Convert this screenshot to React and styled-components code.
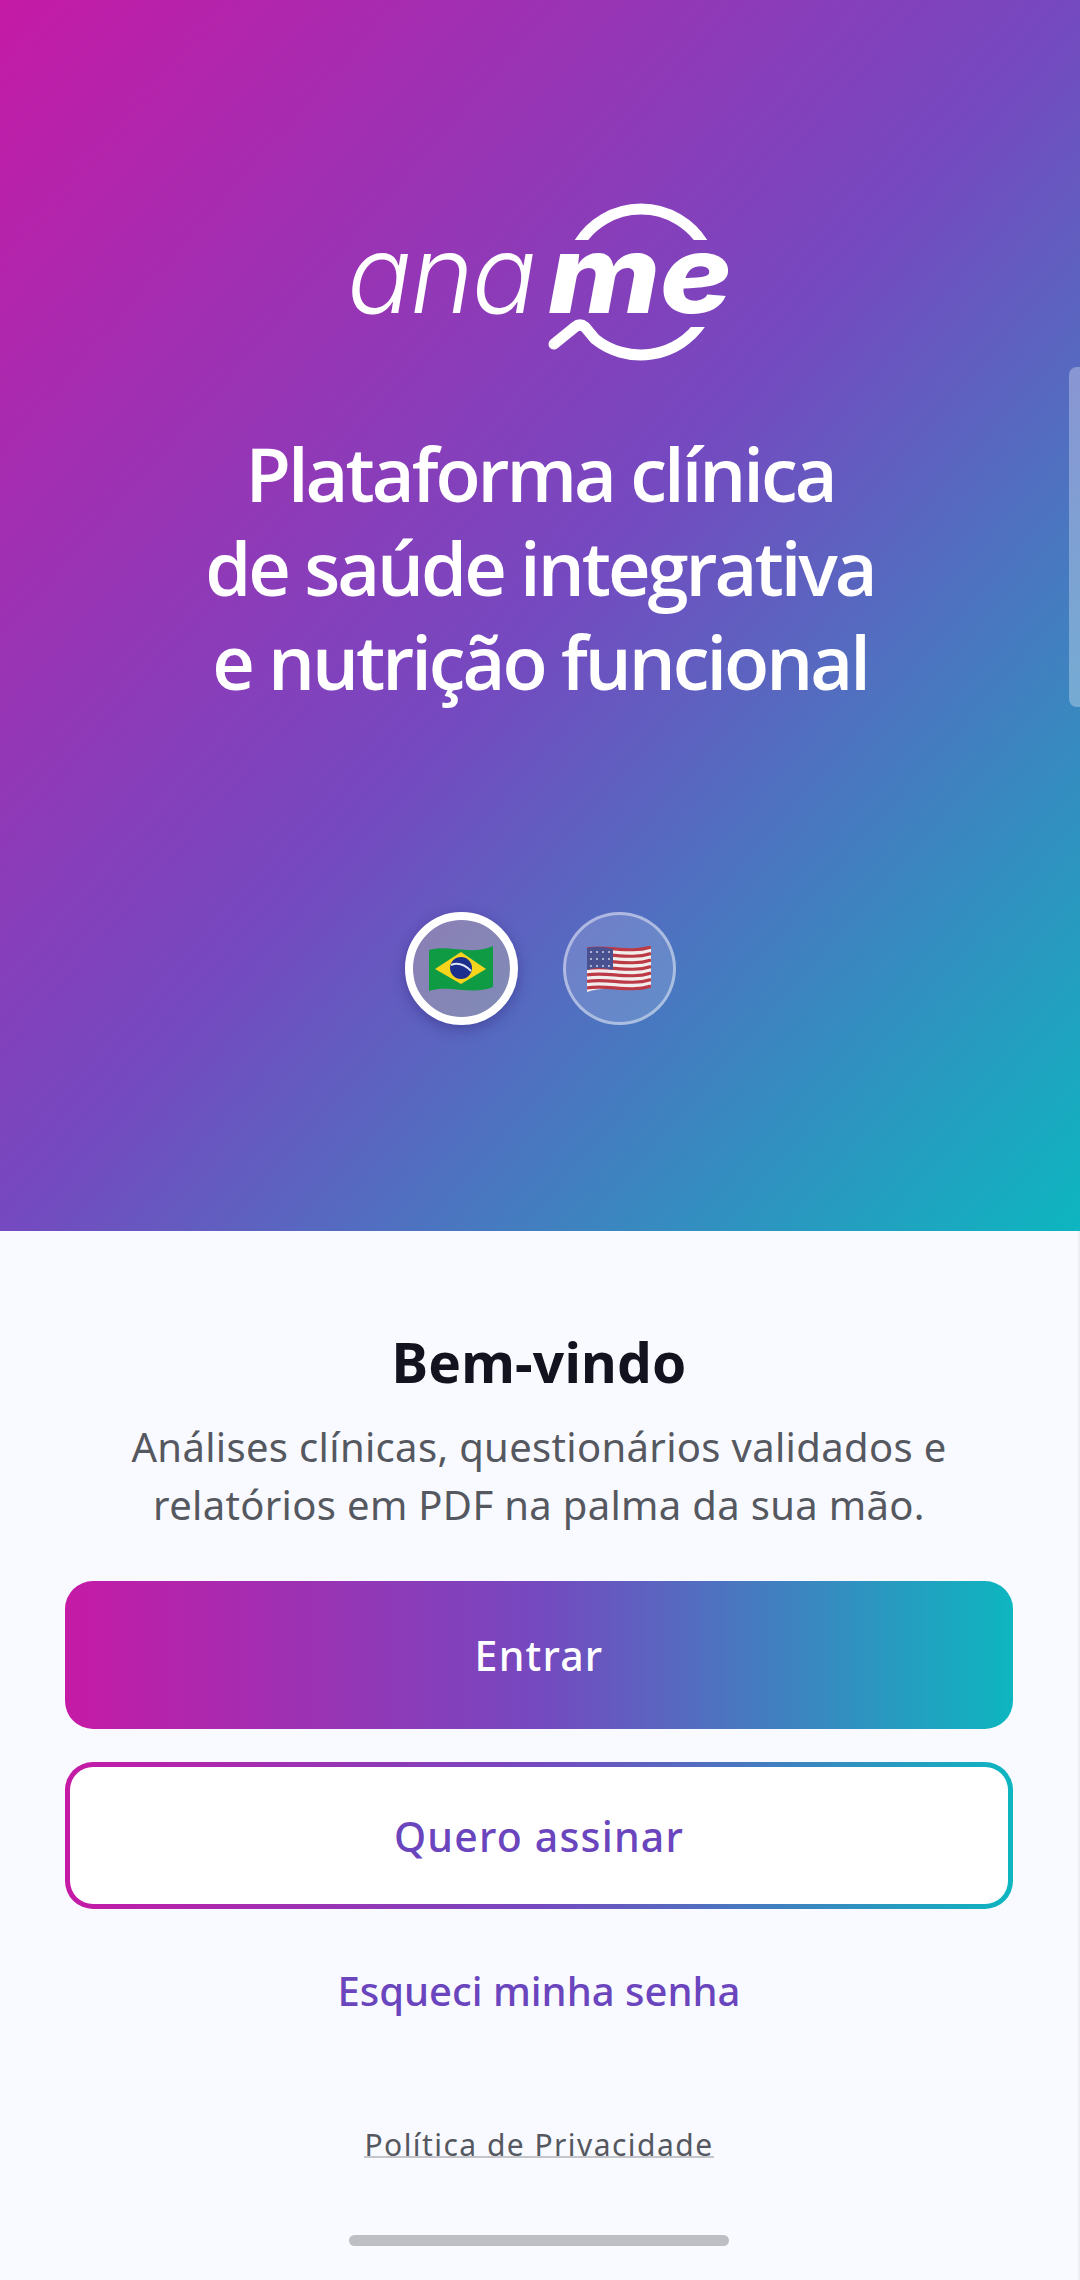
import React from "react";
import styled, { createGlobalStyle } from "styled-components";

const GlobalStyle = createGlobalStyle`
  html, body {
    margin: 0;
    padding: 0;
    background: #f9faff;
  }
  * {
    box-sizing: border-box;
  }
`;

const Screen = styled.div`
  width: 1080px;
  height: 2280px;
  display: flex;
  flex-direction: column;
  overflow: hidden;
  font-family: "Noto Sans", "Open Sans", sans-serif;
`;

const Hero = styled.section`
  position: relative;
  height: 1231px;
  padding-top: 202px;
  display: flex;
  flex-direction: column;
  align-items: center;
  background: linear-gradient(to bottom right, #c51aa6 0%, #7549c0 50%, #0db6c0 100%);
`;

const ScrollHandle = styled.div`
  position: absolute;
  top: 367px;
  right: 0;
  width: 11px;
  height: 340px;
  border-radius: 8px 0 0 8px;
  background: rgba(255, 255, 255, 0.3);
`;

const LogoMark = styled.svg`
  display: block;
  width: 400px;
  height: 165px;
`;

const Title = styled.h1`
  margin: 60px 0 0;
  color: #fff;
  font-family: "Open Sans", "Noto Sans", sans-serif;
  font-size: 74px;
  font-weight: 600;
  line-height: 94px;
  letter-spacing: -3px;
  text-align: center;
`;

const FlagRow = styled.div`
  margin-top: 203px;
  display: flex;
  gap: 45px;
`;

const FlagButton = styled.button`
  width: 113px;
  height: 113px;
  padding: 0;
  display: flex;
  align-items: center;
  justify-content: center;
  border-radius: 50%;
  border: ${(p) => (p.$active ? "8px solid #fff" : "3px solid rgba(255, 255, 255, 0.45)")};
  background: ${(p) => (p.$active ? "rgba(225, 218, 160, 0.3)" : "rgba(255, 255, 255, 0.15)")};
  box-shadow: ${(p) => (p.$active ? "0 4px 14px rgba(40, 30, 110, 0.4)" : "none")};
`;

const Panel = styled.section`
  flex: 1;
  display: flex;
  flex-direction: column;
  align-items: center;
  padding: 96px 65px 0;
  background: #f9faff;
  border-right: 2px solid #eceef3;
`;

const Welcome = styled.h2`
  margin: 0;
  color: #12131f;
  font-size: 55px;
  font-weight: 700;
  line-height: 70px;
  letter-spacing: 0.2px;
`;

const Intro = styled.p`
  margin: 21px 0 0;
  color: #55585f;
  font-size: 40px;
  line-height: 58px;
  letter-spacing: 0.33px;
  text-align: center;
  white-space: nowrap;
`;

const PrimaryButton = styled.button`
  margin-top: 47px;
  width: 948px;
  height: 148px;
  border: 0;
  border-radius: 28px;
  color: #fff;
  font: 500 41px "Noto Sans", sans-serif;
  letter-spacing: 1.2px;
  background: linear-gradient(to right, #c51aa6 0%, #7549c0 50%, #0db6c0 100%);
`;

const OutlineFrame = styled.div`
  margin-top: 33px;
  width: 948px;
  height: 147px;
  padding: 5px;
  border-radius: 28px;
  background: linear-gradient(to right, #c51aa6 0%, #7549c0 50%, #0db6c0 100%);
`;

const OutlineButton = styled.button`
  width: 100%;
  height: 100%;
  border: 0;
  border-radius: 23px;
  background: #fff;
  color: #6a45bd;
  font: 500 41px "Noto Sans", sans-serif;
  letter-spacing: 1.2px;
`;

const ForgotLink = styled.a`
  margin-top: 54px;
  color: #6a45bd;
  font-size: 40px;
  font-weight: 500;
  line-height: 56px;
`;

const PrivacyLink = styled.a`
  margin-top: 106px;
  height: 33px;
  color: #55585f;
  font-size: 30px;
  line-height: 40px;
  letter-spacing: 1.45px;
  border-bottom: 2px solid #c4c6cc;
`;

const HomeBar = styled.div`
  margin-top: 77px;
  width: 380px;
  height: 11px;
  flex: none;
  border-radius: 6px;
  background: #bdbfc5;
`;

const Logo = () => (
  <LogoMark viewBox="0 0 400 165">
    <defs>
      <clipPath id="arc-top">
        <rect x="0" y="0" width="400" height="38" />
      </clipPath>
      <clipPath id="arc-bottom">
        <polygon points="0,100 300,100 300,125 400,125 400,165 0,165" />
      </clipPath>
    </defs>
    <text x="7" y="111" fill="#fff" fontFamily="Inter, sans-serif" fontStyle="italic" fontWeight="350" fontSize="108" letterSpacing="-2">
      ana
    </text>
    <text
      x="208"
      y="111"
      fill="#fff"
      fontFamily="Inter, sans-serif"
      fontStyle="italic"
      fontWeight="800"
      fontSize="108"
      textLength="184"
      lengthAdjust="spacingAndGlyphs"
    >
      me
    </text>
    <path d="M237 45 A73 73 0 0 1 365 45" fill="none" stroke="#fff" strokeWidth="11" clipPath="url(#arc-top)" />
    <path
      d="M214 142 L235 125 Q240 121 245 125 L255 137 A73 73 0 0 0 361 121"
      fill="none"
      stroke="#fff"
      strokeWidth="11"
      strokeLinecap="round"
      strokeLinejoin="round"
      clipPath="url(#arc-bottom)"
    />
  </LogoMark>
);

const BrazilFlag = () => (
  <svg width="64" height="46" viewBox="0 0 64 46">
    <path d="M0 4 C20 -2 42 10 64 0 V41 C42 50 20 38 0 45 Z" fill="#0f9a44" />
    <path d="M6 23 L32 6 L57 23 L32 38 Z" fill="#f7d51d" />
    <circle cx="32" cy="22" r="11" fill="#1b2f8f" />
    <path d="M22 19 Q32 15 42 25" fill="none" stroke="#dfe6f3" strokeWidth="2" />
  </svg>
);

const UsaFlag = () => {
  const stripes = [0, 6.5, 13, 19.5, 26, 32.5, 39];
  const stars = [6, 13, 20];
  return (
    <svg width="64" height="46" viewBox="0 0 64 46">
      <path d="M0 2 C20 -2 42 8 64 0 V40 C42 48 20 38 0 46 Z" fill="#f3eeee" />
      {stripes.map((y) => (
        <path
          key={y}
          d={`M0 ${y + 3} C20 ${y - 1} 42 ${y + 8} 64 ${y + 1}`}
          fill="none"
          stroke="#bb3a46"
          strokeWidth="3.2"
        />
      ))}
      <path d="M0 2 C10 0 18 1 26 3 V24 C18 22 10 21 0 24 Z" fill="#4a5191" />
      {stars.map((y) =>
        [4, 10, 16, 22].map((x) => <circle key={`${x}-${y}`} cx={x} cy={y} r="1" fill="#cfd2e6" />)
      )}
    </svg>
  );
};

export default function App() {
  return (
    <>
      <GlobalStyle />
      <Screen>
        <Hero>
          <Logo />
          <Title>
            Plataforma clínica
            <br />
            de saúde integrativa
            <br />e nutrição funcional
          </Title>
          <FlagRow>
            <FlagButton $active>
              <BrazilFlag />
            </FlagButton>
            <FlagButton>
              <UsaFlag />
            </FlagButton>
          </FlagRow>
          <ScrollHandle />
        </Hero>
        <Panel>
          <Welcome>Bem-vindo</Welcome>
          <Intro>
            Análises clínicas, questionários validados e
            <br />
            relatórios em PDF na palma da sua mão.
          </Intro>
          <PrimaryButton>Entrar</PrimaryButton>
          <OutlineFrame>
            <OutlineButton>Quero assinar</OutlineButton>
          </OutlineFrame>
          <ForgotLink>Esqueci minha senha</ForgotLink>
          <PrivacyLink>Política de Privacidade</PrivacyLink>
          <HomeBar />
        </Panel>
      </Screen>
    </>
  );
}
